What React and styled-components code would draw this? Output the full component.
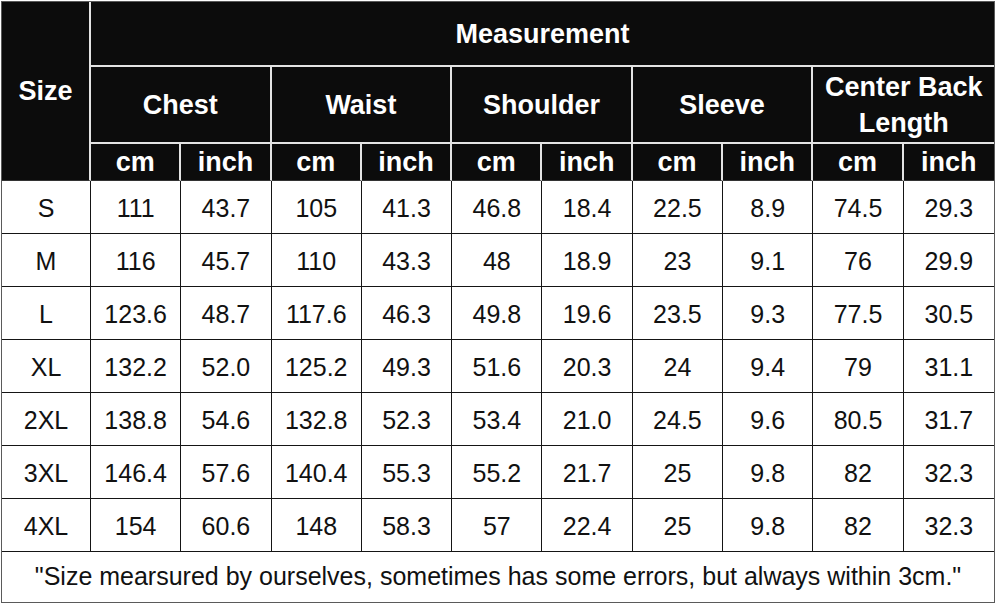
import React from "react";
import styled, { createGlobalStyle } from "styled-components";

const Global = createGlobalStyle`
  html, body { margin: 0; padding: 0; background: #ffffff; }
  body { font-family: "Liberation Sans", Arial, sans-serif; }
`;

const Page = styled.div`
  padding: 1px 0 0 1px;
  width: 1000px;
  height: 608px;
  box-sizing: border-box;
`;

const Table = styled.table`
  width: 994px;
  table-layout: fixed;
  border-collapse: separate;
  border-spacing: 0;
  border: 1px solid #5a5a5a;
`;

const HeadRow = styled.tr`
  height: ${(p) => p.$h}px;
`;

const Th = styled.th`
  background: #0c0c0c;
  color: #ffffff;
  font-weight: 700;
  font-size: 27px;
  line-height: 36px;
  text-align: center;
  vertical-align: middle;
  padding: 0;
  border-right: 2px solid #e4e4e4;
  border-bottom: ${(p) => (p.$last ? "1px solid #333" : "2px solid #e4e4e4")};
  &:last-child { border-right: none; }
`;

const BodyRow = styled.tr`
  height: 53px;
`;

const Td = styled.td`
  color: #111111;
  font-size: 25px;
  text-align: center;
  vertical-align: middle;
  padding: 2px 0 0;
  border-right: 1px solid #151515;
  border-bottom: 1px solid #151515;
  &:last-child { border-right: none; }
`;

const FooterRow = styled.tr`
  height: 50px;
`;

const Note = styled.td`
  color: #111111;
  font-size: 25px;
  text-align: center;
  vertical-align: middle;
  padding: 0 0 2px;
`;

const groups = ["Chest", "Waist", "Shoulder", "Sleeve", "Center Back Length"];

const rows = [
  ["S", "111", "43.7", "105", "41.3", "46.8", "18.4", "22.5", "8.9", "74.5", "29.3"],
  ["M", "116", "45.7", "110", "43.3", "48", "18.9", "23", "9.1", "76", "29.9"],
  ["L", "123.6", "48.7", "117.6", "46.3", "49.8", "19.6", "23.5", "9.3", "77.5", "30.5"],
  ["XL", "132.2", "52.0", "125.2", "49.3", "51.6", "20.3", "24", "9.4", "79", "31.1"],
  ["2XL", "138.8", "54.6", "132.8", "52.3", "53.4", "21.0", "24.5", "9.6", "80.5", "31.7"],
  ["3XL", "146.4", "57.6", "140.4", "55.3", "55.2", "21.7", "25", "9.8", "82", "32.3"],
  ["4XL", "154", "60.6", "148", "58.3", "57", "22.4", "25", "9.8", "82", "32.3"],
];

export default function App() {
  return (
    <Page>
      <Global />
      <Table>
        <colgroup>
          <col style={{ width: 89 }} />
          {Array.from({ length: 10 }).map((_, i) => (
            <col key={i} />
          ))}
        </colgroup>
        <thead>
          <HeadRow $h={65}>
            <Th rowSpan={3} $last>Size</Th>
            <Th colSpan={10}>Measurement</Th>
          </HeadRow>
          <HeadRow $h={77}>
            {groups.map((g) => (
              <Th key={g} colSpan={2}>
                {g === "Center Back Length" ? (
                  <>
                    Center Back
                    <br />
                    Length
                  </>
                ) : (
                  g
                )}
              </Th>
            ))}
          </HeadRow>
          <HeadRow $h={37}>
            {groups.map((g) => (
              <React.Fragment key={g}>
                <Th $last>cm</Th>
                <Th $last>inch</Th>
              </React.Fragment>
            ))}
          </HeadRow>
        </thead>
        <tbody>
          {rows.map((r) => (
            <BodyRow key={r[0]}>
              {r.map((v, i) => (
                <Td key={i}>{v}</Td>
              ))}
            </BodyRow>
          ))}
          <FooterRow>
            <Note colSpan={11}>
              "Size mearsured by ourselves, sometimes has some errors, but always within 3cm."
            </Note>
          </FooterRow>
        </tbody>
      </Table>
    </Page>
  );
}
